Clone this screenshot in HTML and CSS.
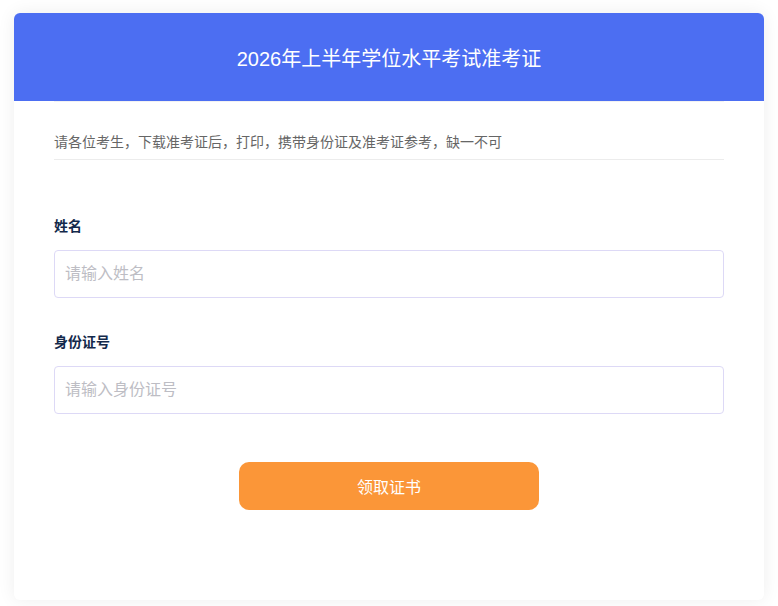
FILE: index.html
```html
<!DOCTYPE html>
<html lang="zh-CN">
<head>
    <meta charset="UTF-8">
    <meta name="viewport" content="width=device-width, initial-scale=1.0">
    <title>2026年上半年学位水平考试准考证</title>
    <link rel="stylesheet" href="styles.css">
</head>
<body>
    <div class="page">
        <div class="card">
            <div class="card-header">
                <h1 class="card-title">2026年上半年学位水平考试准考证</h1>
            </div>

            <div class="card-body">
                <p class="notice">请各位考生，下载准考证后，打印，携带身份证及准考证参考，缺一不可</p>

                <form class="ticket-form" onsubmit="return false;">
                    <div class="form-group">
                        <label class="form-label" for="name">姓名</label>
                        <input class="form-input" id="name" type="text" placeholder="请输入姓名">
                    </div>

                    <div class="form-group">
                        <label class="form-label" for="idcard">身份证号</label>
                        <input class="form-input" id="idcard" type="text" placeholder="请输入身份证号">
                    </div>

                    <div class="form-actions">
                        <button class="btn-submit" type="submit">领取证书</button>
                    </div>
                </form>
            </div>
        </div>
    </div>
</body>
</html>
```

FILE: styles.css
```css
* {
    margin: 0;
    padding: 0;
    box-sizing: border-box;
}

body {
    font-family: "Liberation Sans", "Noto Sans CJK SC", sans-serif;
    background: #ffffff;
    color: #333;
}

.page {
    padding: 13px 14px 6px;
}

.card {
    background: #fff;
    border-radius: 6px;
    overflow: hidden;
    box-shadow: 0 0 18px rgba(0, 0, 0, 0.07);
    min-height: 587px;
}

.card-header {
    height: 88px;
    background: #4c6ef2;
    display: flex;
    align-items: center;
    justify-content: center;
}

.card-title {
    color: #fff;
    font-size: 20px;
    font-weight: normal;
    line-height: 1;
    padding-top: 4px;
}

.card-body {
    padding: 0 40px 90px;
}

.notice {
    border-top: 1px solid #f2f2f2;
    border-bottom: 1px solid #ececec;
    padding: 30px 0 7px;
    font-size: 14px;
    line-height: 20px;
    color: #666;
}

.ticket-form {
    padding-top: 56px;
}

.form-group {
    margin-bottom: 34px;
}

.form-label {
    display: block;
    font-size: 14px;
    line-height: 20px;
    font-weight: bold;
    color: #13294b;
    margin-bottom: 14px;
}

.form-input {
    display: block;
    width: 100%;
    height: 48px;
    padding: 0 10px;
    border: 1px solid #ddd9f6;
    border-radius: 4px;
    font-family: inherit;
    font-size: 16px;
    color: #333;
    outline: none;
}

.form-input::placeholder {
    color: #bdbdc4;
}

.form-actions {
    display: flex;
    justify-content: center;
    padding-top: 14px;
}

.btn-submit {
    width: 300px;
    height: 48px;
    border: none;
    border-radius: 10px;
    background: #fb9638;
    color: #fff;
    font-family: inherit;
    font-size: 16px;
    cursor: pointer;
}
```
